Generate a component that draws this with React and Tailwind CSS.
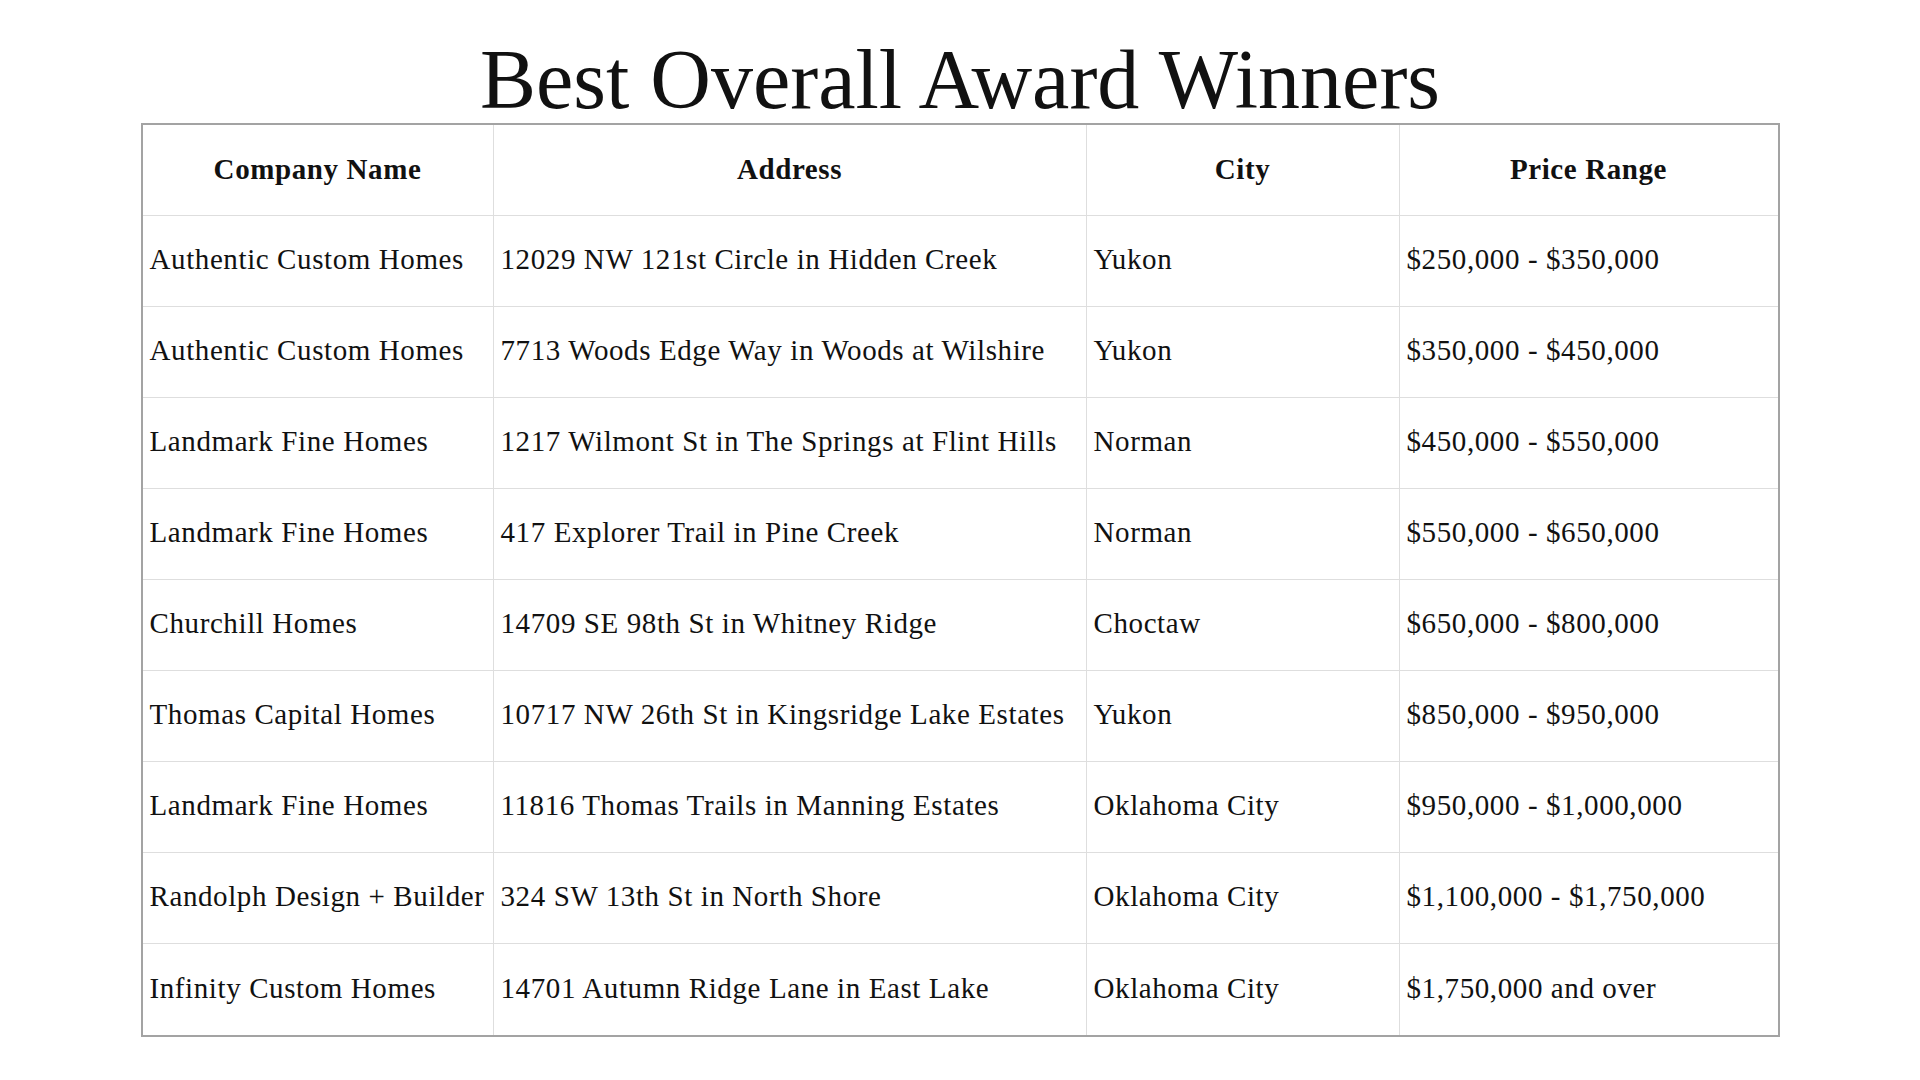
import React from "react";

const rows = [
  ["Authentic Custom Homes", "12029 NW 121st Circle in Hidden Creek", "Yukon", "$250,000 - $350,000"],
  ["Authentic Custom Homes", "7713 Woods Edge Way in Woods at Wilshire", "Yukon", "$350,000 - $450,000"],
  ["Landmark Fine Homes", "1217 Wilmont St in The Springs at Flint Hills", "Norman", "$450,000 - $550,000"],
  ["Landmark Fine Homes", "417 Explorer Trail in Pine Creek", "Norman", "$550,000 - $650,000"],
  ["Churchill Homes", "14709 SE 98th St in Whitney Ridge", "Choctaw", "$650,000 - $800,000"],
  ["Thomas Capital Homes", "10717 NW 26th St in Kingsridge Lake Estates", "Yukon", "$850,000 - $950,000"],
  ["Landmark Fine Homes", "11816 Thomas Trails in Manning Estates", "Oklahoma City", "$950,000 - $1,000,000"],
  ["Randolph Design + Builder", "324 SW 13th St in North Shore", "Oklahoma City", "$1,100,000 - $1,750,000"],
  ["Infinity Custom Homes", "14701 Autumn Ridge Lane in East Lake", "Oklahoma City", "$1,750,000 and over"],
];

const headers = ["Company Name", "Address", "City", "Price Range"];

const App = () => {
  return (
    <div className="min-h-screen w-full bg-white text-[#111] font-['Liberation_Serif',serif]">
      <div className="flex flex-col items-center pt-[38px]">
        <h1 className="text-[84px] leading-none font-normal mb-[1px]">Best Overall Award Winners</h1>

        {/* awards table */}
        <div className="w-[1639px] border-2 border-[#a3a3a3] grid grid-cols-[351px_593px_313px_1fr] text-[29px] tracking-[0.6px]">
          {headers.map((h, i) => (
            <div
              key={h}
              className={
                "h-[91px] flex items-center justify-center font-bold border-b border-[#dedede] " +
                (i < 3 ? "border-r" : "")
              }
            >
              {h}
            </div>
          ))}
          {rows.map((row, r) =>
            row.map((cell, i) => (
              <div
                key={r + "-" + i}
                className={
                  "h-[91px] flex items-center pl-[7px] pb-[2px] whitespace-nowrap border-[#dedede] " +
                  (i < 3 ? "border-r " : "") +
                  (r < rows.length - 1 ? "border-b" : "")
                }
              >
                {cell}
              </div>
            ))
          )}
        </div>
      </div>
    </div>
  );
};

export default App;
